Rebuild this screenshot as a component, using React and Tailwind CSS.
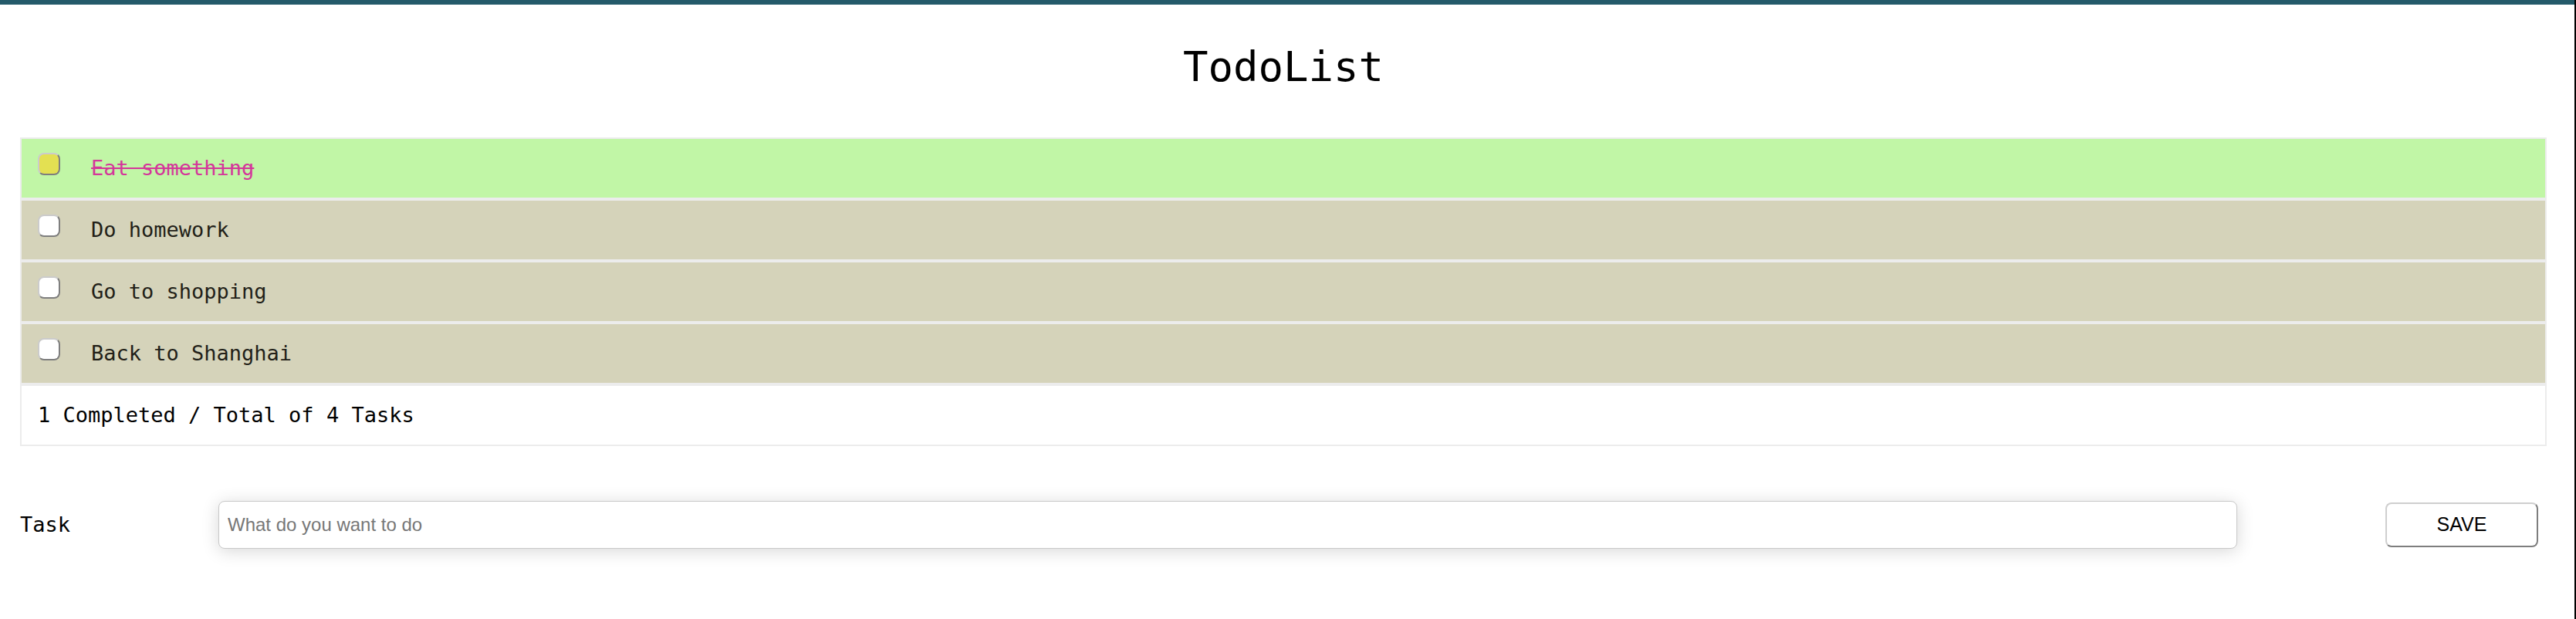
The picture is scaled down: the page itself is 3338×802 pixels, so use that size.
import { useState } from "react";

const mono = { fontFamily: '"DejaVu Sans Mono", "Liberation Mono", monospace' };
const sans = { fontFamily: '"Liberation Sans", Arial, sans-serif' };

export default function App() {
  const [todos, setTodos] = useState([
    { id: 1, text: "Eat something", done: true },
    { id: 2, text: "Do homework", done: false },
    { id: 3, text: "Go to shopping", done: false },
    { id: 4, text: "Back to Shanghai", done: false }
  ]);
  const [task, setTask] = useState("");

  const toggle = id => setTodos(todos.map(t => (t.id === id ? { ...t, done: !t.done } : t)));

  const handleSave = e => {
    e.preventDefault();
    if (!task.trim()) return;
    setTodos([...todos, { id: Date.now(), text: task.trim(), done: false }]);
    setTask("");
  };

  const completed = todos.filter(t => t.done).length;

  return (
    <div className="h-[802px] w-full bg-white border-r-2 border-black" style={mono}>
      <div className="h-[6px] bg-[#245a6a]" />

      <div className="pl-[26px] pr-[36px]">
        <h1 className="mt-[49px] mb-[60px] text-center text-[54px] leading-[63px] text-black">TodoList</h1>

        {/* list */}
        <div className="flex flex-col gap-[4px] border-2 border-[#ececec] bg-[#ececec]">
          {todos.map(t => (
            <div
              key={t.id}
              className={`flex h-[76px] items-center pl-[21px] ${t.done ? "bg-[#c1f6a6]" : "bg-[#d5d3ba]"}`}
            >
              <button
                type="button"
                onClick={() => toggle(t.id)}
                className={`mb-[11px] h-[29px] w-[29px] shrink-0 rounded-[8px] border-2 border-t-[#cbcbcb] border-l-[#cbcbcb] border-r-[#7e7e7e] border-b-[#7e7e7e] ${t.done ? "bg-[#e3e052]" : "bg-white"}`}
              />
              <span
                className={`ml-[40px] text-[27px] leading-[32px] ${t.done ? "text-[#d4379a] line-through" : "text-[#221f18]"}`}
              >
                {t.text}
              </span>
            </div>
          ))}
          <div className="flex h-[76px] items-center bg-white pl-[21px] text-[27px] leading-[32px] text-black">
            {completed} Completed / Total of {todos.length} Tasks
          </div>
        </div>

        {/* form */}
        <form onSubmit={handleSave} className="mt-[71px] flex h-[62px] items-center">
          <label className="w-[257px] shrink-0 text-[27px] leading-[32px] text-black">Task</label>
          <input
            value={task}
            onChange={e => setTask(e.target.value)}
            placeholder="What do you want to do"
            className="h-[62px] flex-1 rounded-[8px] border border-[#c8c8c8] bg-white pl-[11px] text-[24px] text-black placeholder:text-[#777] shadow-[0_3px_22px_rgba(0,0,0,0.16)] outline-none"
            style={sans}
          />
          <button
            type="submit"
            className="ml-[192px] mr-[11px] h-[58px] w-[198px] shrink-0 rounded-[8px] border-2 border-t-[#cfcfcf] border-l-[#cfcfcf] border-r-[#7e7e7e] border-b-[#7e7e7e] bg-white text-[25px] text-black"
            style={sans}
          >
            SAVE
          </button>
        </form>
      </div>
    </div>
  );
}
